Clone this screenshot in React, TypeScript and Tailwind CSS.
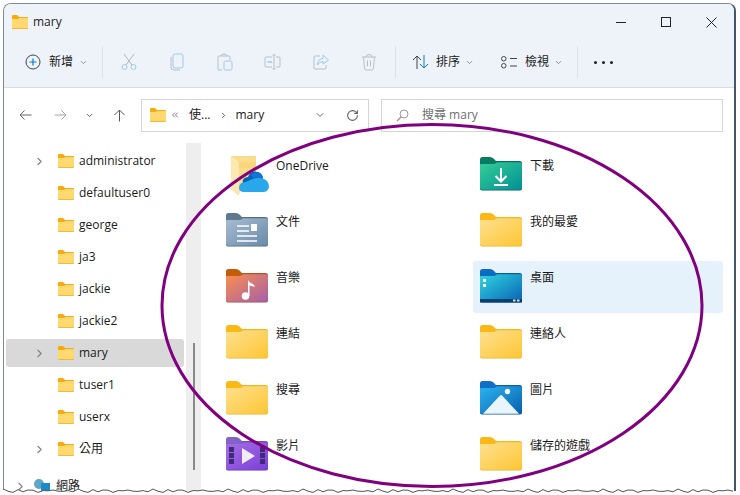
import type { ReactNode } from "react";
import { ChevronDown, ChevronRight, ChevronsLeft, RotateCw } from "lucide-react";

const treeRows = [
  { label: "administrator", arrow: true },
  { label: "defaultuser0", arrow: false },
  { label: "george", arrow: false },
  { label: "ja3", arrow: false },
  { label: "jackie", arrow: false },
  { label: "jackie2", arrow: false },
  { label: "mary", arrow: true, active: true },
  { label: "tuser1", arrow: false },
  { label: "userx", arrow: false },
  { label: "公用", arrow: true },
];

// tab + body shape shared by all the big folder icons
function BigFolder({ id, tab, from, to, edge, children }: { id: string; tab: string; from: string; to: string; edge: string; children?: ReactNode }) {
  return (
    <svg width="42" height="34" viewBox="0 0 42 34" className="shrink-0">
      <defs>
        <linearGradient id={id} x1="0" y1="0" x2="1" y2="1">
          <stop offset="0" stopColor={from} />
          <stop offset="1" stopColor={to} />
        </linearGradient>
      </defs>
      <path d="M0 2.5Q0 0 2.5 0H10Q12 0 13.5 1.5L16 4H39Q42 4 42 7V12H0Z" fill={tab} />
      <path d="M0 7.5Q0 7 1 7H13Q15 7 16 5.5L17 4.5H40.5Q42 4.5 42 6V31.5Q42 33.5 40 33.5H2Q0 33.5 0 31.5Z" fill={edge} />
      <path d="M0 7.5Q0 7 1 7H13Q15 7 16 6L17 5.3H40.5Q42 5.3 42 6.5V31Q42 32.8 40 32.8H2Q0 32.8 0 31Z" fill={`url(#${id})`} />
      {children}
    </svg>
  );
}

function PlainFolder({ id }: { id: string }) {
  return <BigFolder id={id} tab="#fcb814" from="#fee08f" to="#fdc635" edge="#eeb22c" />;
}

function SmallFolder() {
  return (
    <svg width="16" height="14" viewBox="0 0 16 14" className="shrink-0">
      <path d="M0 1Q0 0 1 0H5L7 2H15Q16 2 16 3V5H0Z" fill="#f5ac0a" />
      <path d="M0 3.5H6L7.5 2.5H15Q16 2.5 16 3.5V13Q16 14 15 14H1Q0 14 0 13Z" fill="#f3ae1d" />
      <path d="M0 4H6L7.5 3H15.5Q16 3 16 3.5V12.5Q16 13.3 15 13.3H1Q0 13.3 0 12.5Z" fill="#fed871" />
    </svg>
  );
}

function OneDriveIcon() {
  return (
    <svg width="43" height="40" viewBox="0 0 43 40" className="shrink-0 -mt-[1px]">
      <path d="M5 0H30V28H15L13 39H12L5 33Z" fill="#fbdb8c" />
      <path d="M5 0L13 6V39L5 33Z" fill="#fde8b0" />
      <path d="M13 6H30V12H13Z" fill="#f9d57c" />
      <path d="M18 30Q14 22 22 21Q25 14 32 16Q36 17 37 22L32 30Z" fill="#0364b8" />
      <path d="M25 19Q30 14 35 18Q37 20 37 22L31 27Z" fill="#0f78d4" />
      <path d="M13 32Q13 26 20 26Q30 20 38 23Q43 25 43 31Q42 36 37 36H18Q13 36 13 32Z" fill="#28a8ea" />
    </svg>
  );
}

const fileItems: { label: string; icon: ReactNode; active?: boolean }[] = [
  { label: "OneDrive", icon: <OneDriveIcon /> },
  {
    label: "下載",
    icon: (
      <BigFolder id="dl" tab="#067d62" from="#35cf95" to="#019097" edge="#075f60">
        <path d="M21 11V24M15.5 19L21 24.5L26.5 19M14 28H28" stroke="#fff" strokeWidth="2" fill="none" />
      </BigFolder>
    ),
  },
  {
    label: "文件",
    icon: (
      <BigFolder id="doc" tab="#61798c" from="#a8bdd3" to="#688aa8" edge="#4f6577">
        <path d="M11 13H23M11 18H23M11 23H31M11 28H31" stroke="#fff" strokeWidth="1.6" />
        <rect x="25" y="11" width="6" height="7" fill="#fff" />
      </BigFolder>
    ),
  },
  { label: "我的最愛", icon: <PlainFolder id="fav" /> },
  {
    label: "音樂",
    icon: (
      <BigFolder id="mus" tab="#c25d0a" from="#fb8f4f" to="#a65fa8" edge="#9c4f3e">
        <circle cx="19.5" cy="27" r="3.8" fill="#fff" />
        <path d="M22 27V11C24 15 28 14 29 18C27 17 24.5 17 23.5 16.5V27Z" fill="#fff" />
      </BigFolder>
    ),
  },
  {
    label: "桌面",
    active: true,
    icon: (
      <BigFolder id="desk" tab="#0a6cc2" from="#2fd7e0" to="#0a62b4" edge="#0a4f8f">
        <rect x="0" y="30" width="42" height="3.5" fill="#063f75" />
        <rect x="3" y="10" width="3" height="3" fill="#fff" />
        <rect x="3" y="15" width="3" height="3" fill="#fff" />
        <rect x="33" y="30.5" width="2.5" height="2" fill="#cfe3f2" />
        <rect x="37" y="30.5" width="2.5" height="2" fill="#cfe3f2" />
      </BigFolder>
    ),
  },
  { label: "連結", icon: <PlainFolder id="lnk" /> },
  { label: "連絡人", icon: <PlainFolder id="ct" /> },
  { label: "搜尋", icon: <PlainFolder id="sr" /> },
  {
    label: "圖片",
    icon: (
      <BigFolder id="pic" tab="#0f6fc4" from="#2cb4f0" to="#0760ad" edge="#0a5596">
        <circle cx="27.5" cy="10.5" r="2.7" fill="#f2f9ff" />
        <path d="M3 32.8L20 14.5Q21 13.5 22 14.5L39 32.8Z" fill="#e9f5fd" />
      </BigFolder>
    ),
  },
  {
    label: "影片",
    icon: (
      <BigFolder id="vid" tab="#8462c8" from="#a56fe4" to="#7b3fd9" edge="#5e34a8">
        {[9, 15, 21].map((y) => (
          <g key={y} fill="#402a74">
            <rect x="3" y={y + 1} width="5" height="5" />
            <rect x="34" y={y + 1} width="5" height="5" />
          </g>
        ))}
        <path d="M16 11L29 19L16 27Z" fill="#f1ecf9" />
      </BigFolder>
    ),
  },
  { label: "儲存的遊戲", icon: <PlainFolder id="sg" /> },
];

// jagged torn-paper bottom edge
const tornPoints = Array.from({ length: 147 }, (_, i) => {
  const y = 490 + ((i * 7) % 5) * 0.6 - (i % 3 === 0 ? 1 : 0);
  return `${3 + i * 5},${y}`;
}).join(" ");

function ToolIcon({ children }: { children: ReactNode }) {
  return (
    <div className="flex h-8 w-12 items-center justify-center">
      <svg width="18" height="18" viewBox="0 0 18 18" fill="none" strokeWidth="1">
        {children}
      </svg>
    </div>
  );
}

function Divider() {
  return <div className="h-8 w-px bg-[#dde1e6]" />;
}

export default function App() {
  return (
    <div
      className="relative h-[495px] w-[740px] overflow-hidden bg-white text-[12px] text-[#1a1a1a]"
      style={{ fontFamily: '"Open Sans", "Noto Sans CJK TC", sans-serif' }}
    >
      <div className="ml-[3px] mt-[3px] flex h-[488px] w-[733px] flex-col overflow-hidden rounded-t-lg border-l border-r-2 border-t border-l-[#7d8b99] border-r-[#45566b] border-t-[#7d8b99]">
        {/* title bar */}
        <div className="flex h-[36px] items-center bg-[#eef3f9] pl-[8px]">
          <SmallFolder />
          <span className="ml-[5px] text-[#222]">mary</span>
          <div className="ml-auto flex items-center gap-[35px] pr-[17px]">
            <div className="h-px w-[10px] bg-[#222]" />
            <div className="h-[10px] w-[10px] border border-[#222]" />
            <svg width="11" height="11" viewBox="0 0 11 11" stroke="#222" strokeWidth="1">
              <path d="M.5.5L10.5 10.5M10.5.5L.5 10.5" />
            </svg>
          </div>
        </div>

        {/* toolbar */}
        <div className="flex h-[48px] items-center border-b border-[#d9dde2] bg-[#eef3f9] pb-[3px]">
          <div className="flex w-[98px] shrink-0 items-center pl-[21px]">
            <svg width="16" height="16" viewBox="0 0 16 16" fill="none">
              <circle cx="8" cy="8" r="7" stroke="#444" />
              <path d="M8 4.5V11.5M4.5 8H11.5" stroke="#0a7ad1" strokeWidth="1.2" />
            </svg>
            <span className="ml-[8px] whitespace-nowrap">新增</span>
            <ChevronDown size={9} className="ml-[6px] text-[#777]" />
          </div>
          <Divider />
          <div className="ml-[2px] flex">
            <ToolIcon>
              <path d="M4 1L12 12M14 1L6 12" stroke="#b0b7bf" />
              <circle cx="4.5" cy="14" r="2.5" stroke="#9ec9ea" />
              <circle cx="13.5" cy="14" r="2.5" stroke="#9ec9ea" />
            </ToolIcon>
            <ToolIcon>
              <rect x="5" y="1" width="10" height="14" rx="2" stroke="#9ec9ea" />
              <path d="M3 4V14Q3 17 6 17H12" stroke="#b9bfc6" />
            </ToolIcon>
            <ToolIcon>
              <path d="M6 17H3Q2 17 2 16V4Q2 3 3 3H13Q14 3 14 4V7" stroke="#b9bfc6" />
              <path d="M5 3Q5 1 8 1Q11 1 11 3" stroke="#b9bfc6" />
              <rect x="8" y="8" width="8" height="9" rx="1.5" stroke="#9ec9ea" />
            </ToolIcon>
            <ToolIcon>
              <path d="M8 4H2Q1 4 1 5V13Q1 14 2 14H8M12 4H15Q16 4 16 5V13Q16 14 15 14H12M10 2V16M8.5 2H11.5M8.5 16H11.5" stroke="#b9bfc6" />
              <path d="M3.5 9H8" stroke="#9ec9ea" strokeWidth="1.4" />
            </ToolIcon>
            <ToolIcon>
              <path d="M8 3H3Q2 3 2 4V15Q2 16 3 16H13Q14 16 14 15V12" stroke="#b9bfc6" />
              <path d="M11 2L16.5 7L11 11V8.5Q7 8.5 5.5 12Q5.5 6 11 5.5Z" stroke="#9ec9ea" />
            </ToolIcon>
            <ToolIcon>
              <path d="M2 4H16M6 4Q6 1.500 9 1.500Q12 1.500 12 4M3.500 4L4.500 15Q4.500 17 6.500 17H11.500Q13.500 17 13.500 15L14.500 4M7.500 7.500V13.500M10.500 7.500V13.500" stroke="#b9bfc6" />
            </ToolIcon>
          </div>
          <div className="ml-[2px]">
            <Divider />
          </div>
          <div className="ml-[16px] flex w-[72px] shrink-0 items-center">
            <svg width="17" height="14" viewBox="0 0 17 14" fill="none">
              <path d="M5 14V1M1 5L5 1L9 5" stroke="#444" />
              <path d="M12 0V13M8 9L12 13L16 9" stroke="#0a7ad1" />
            </svg>
            <span className="ml-[7px] whitespace-nowrap">排序</span>
            <ChevronDown size={9} className="ml-[5px] text-[#777]" />
          </div>
          <div className="ml-[17px] flex w-[60px] shrink-0 items-center">
            <svg width="16" height="13" viewBox="0 0 16 13" fill="none" stroke="#444" className="shrink-0">
              <rect x=".5" y=".5" width="4.500" height="4.500" rx="2.200" />
              <rect x=".5" y="7.500" width="4.500" height="4.500" rx="2.200" />
              <path d="M9 2.500H16M9 10H16" />
            </svg>
            <span className="ml-[8px] whitespace-nowrap">檢視</span>
            <ChevronDown size={9} className="ml-[5px] shrink-0 text-[#777]" />
          </div>
          <div className="ml-[16px]">
            <Divider />
          </div>
          <div className="ml-[16px] flex gap-[5px]">
            <div className="h-[3px] w-[3px] rounded-full bg-[#222]" />
            <div className="h-[3px] w-[3px] rounded-full bg-[#222]" />
            <div className="h-[3px] w-[3px] rounded-full bg-[#222]" />
          </div>
        </div>

        {/* address row */}
        <div className="flex h-[55px] shrink-0 items-center pb-[1px]">
          <div className="flex w-[137px] shrink-0 items-center pl-[15px]">
            <svg width="13" height="12" viewBox="0 0 13 12" fill="none" stroke="#666">
              <path d="M12.500 6H1M5.500 1.500L1 6L5.500 10.500" />
            </svg>
            <svg width="13" height="12" viewBox="0 0 13 12" fill="none" stroke="#a5a5a5" className="ml-[22px]">
              <path d="M.5 6H12M7.500 1.500L12 6L7.500 10.500" />
            </svg>
            <ChevronDown size={9} strokeWidth={2.5} className="ml-[18px] text-[#555]" />
            <svg width="13" height="13" viewBox="0 0 13 13" fill="none" stroke="#555" className="ml-[19px]">
              <path d="M6.500 12.500V1M1.500 6L6.500 1L11.500 6" />
            </svg>
          </div>
          <div className="flex h-[33px] w-[228px] shrink-0 items-center border border-[#d5d5d5] pl-[8px]">
            <SmallFolder />
            <ChevronsLeft size={10} strokeWidth={2} className="ml-[4px] text-[#666]" />
            <span className="ml-[9px]">使...</span>
            <ChevronRight size={9} strokeWidth={2.5} className="ml-[9px] text-[#555]" />
            <span className="ml-[7px]">mary</span>
            <ChevronDown size={12} className="ml-[50px] text-[#666]" />
            <RotateCw size={13} className="ml-[20px] text-[#666]" />
          </div>
          <div className="ml-[12px] flex h-[33px] w-[342px] shrink-0 items-center border border-[#d5d5d5] pl-[14px] text-[#707070]">
            <svg width="13" height="13" viewBox="0 0 13 13" fill="none">
              <circle cx="8" cy="5" r="4" stroke="#999" />
              <path d="M5 8L1 12" stroke="#b08a8a" strokeWidth="1.2" />
            </svg>
            <span className="ml-[13px]">搜尋 mary</span>
          </div>
        </div>

        {/* main */}
        <div className="flex min-h-0 flex-1">
          <div className="flex w-[181px] shrink-0 flex-col pl-[2px] pr-px pt-[4px]">
            {treeRows.map((row) => (
              <div
                key={row.label}
                className={`mb-[4px] flex h-[28px] shrink-0 items-center rounded-[3px] ${row.active ? "bg-[#d9d9d9]" : ""}`}
              >
                <div className="flex w-[52px] justify-end pr-[12px]">
                  {row.arrow && <ChevronRight size={13} strokeWidth={2} className="text-[#808080]" />}
                </div>
                <SmallFolder />
                <span className="ml-[5px]">{row.label}</span>
              </div>
            ))}
            <div className="mt-[5px] flex h-[28px] shrink-0 items-center">
              <ChevronRight size={13} strokeWidth={2} className="ml-[8px] text-[#808080]" />
              <svg width="16" height="14" viewBox="0 0 16 14" className="ml-[7px] shrink-0">
                <circle cx="5" cy="5" r="5" fill="#5fa5c8" />
                <rect x="7" y="4" width="9" height="8" fill="#1a8ac9" />
              </svg>
              <span className="ml-[6px]">網路</span>
            </div>
          </div>
          <div className="ml-px w-[15px] shrink-0 bg-[#eeeeee] pl-[7px] pt-[200px]">
            <div className="h-[127px] w-[2px] bg-[#8a8a8a]" />
          </div>
          <div className="ml-[18px] grid h-fit grid-cols-[250px_250px] gap-x-[4px] gap-y-[4px] pt-[6px]">
            {fileItems.map((item) => (
              <div
                key={item.label}
                className={`flex h-[52px] items-start rounded-[3px] pl-[7px] pt-[8px] ${item.active ? "bg-[#e5f1fb]" : ""}`}
              >
                <div className="flex h-[34px] w-[42px] items-start">{item.icon}</div>
                <span className="ml-[8px] mt-px leading-[16px]">{item.label}</span>
              </div>
            ))}
          </div>
        </div>
      </div>

      {/* hand-drawn ellipse over the window */}
      <svg width="740" height="495" className="pointer-events-none absolute left-0 top-0">
        <ellipse cx="432" cy="305.500" rx="270" ry="181" fill="none" stroke="#800080" strokeWidth="3" />
      </svg>

      {/* torn bottom edge */}
      <svg width="740" height="495" className="pointer-events-none absolute left-0 top-0">
        <polygon points={`3,495 ${tornPoints} 738,495`} fill="#fff" />
        <polyline points={tornPoints} fill="none" stroke="#555" strokeWidth="1" />
      </svg>
    </div>
  );
}
